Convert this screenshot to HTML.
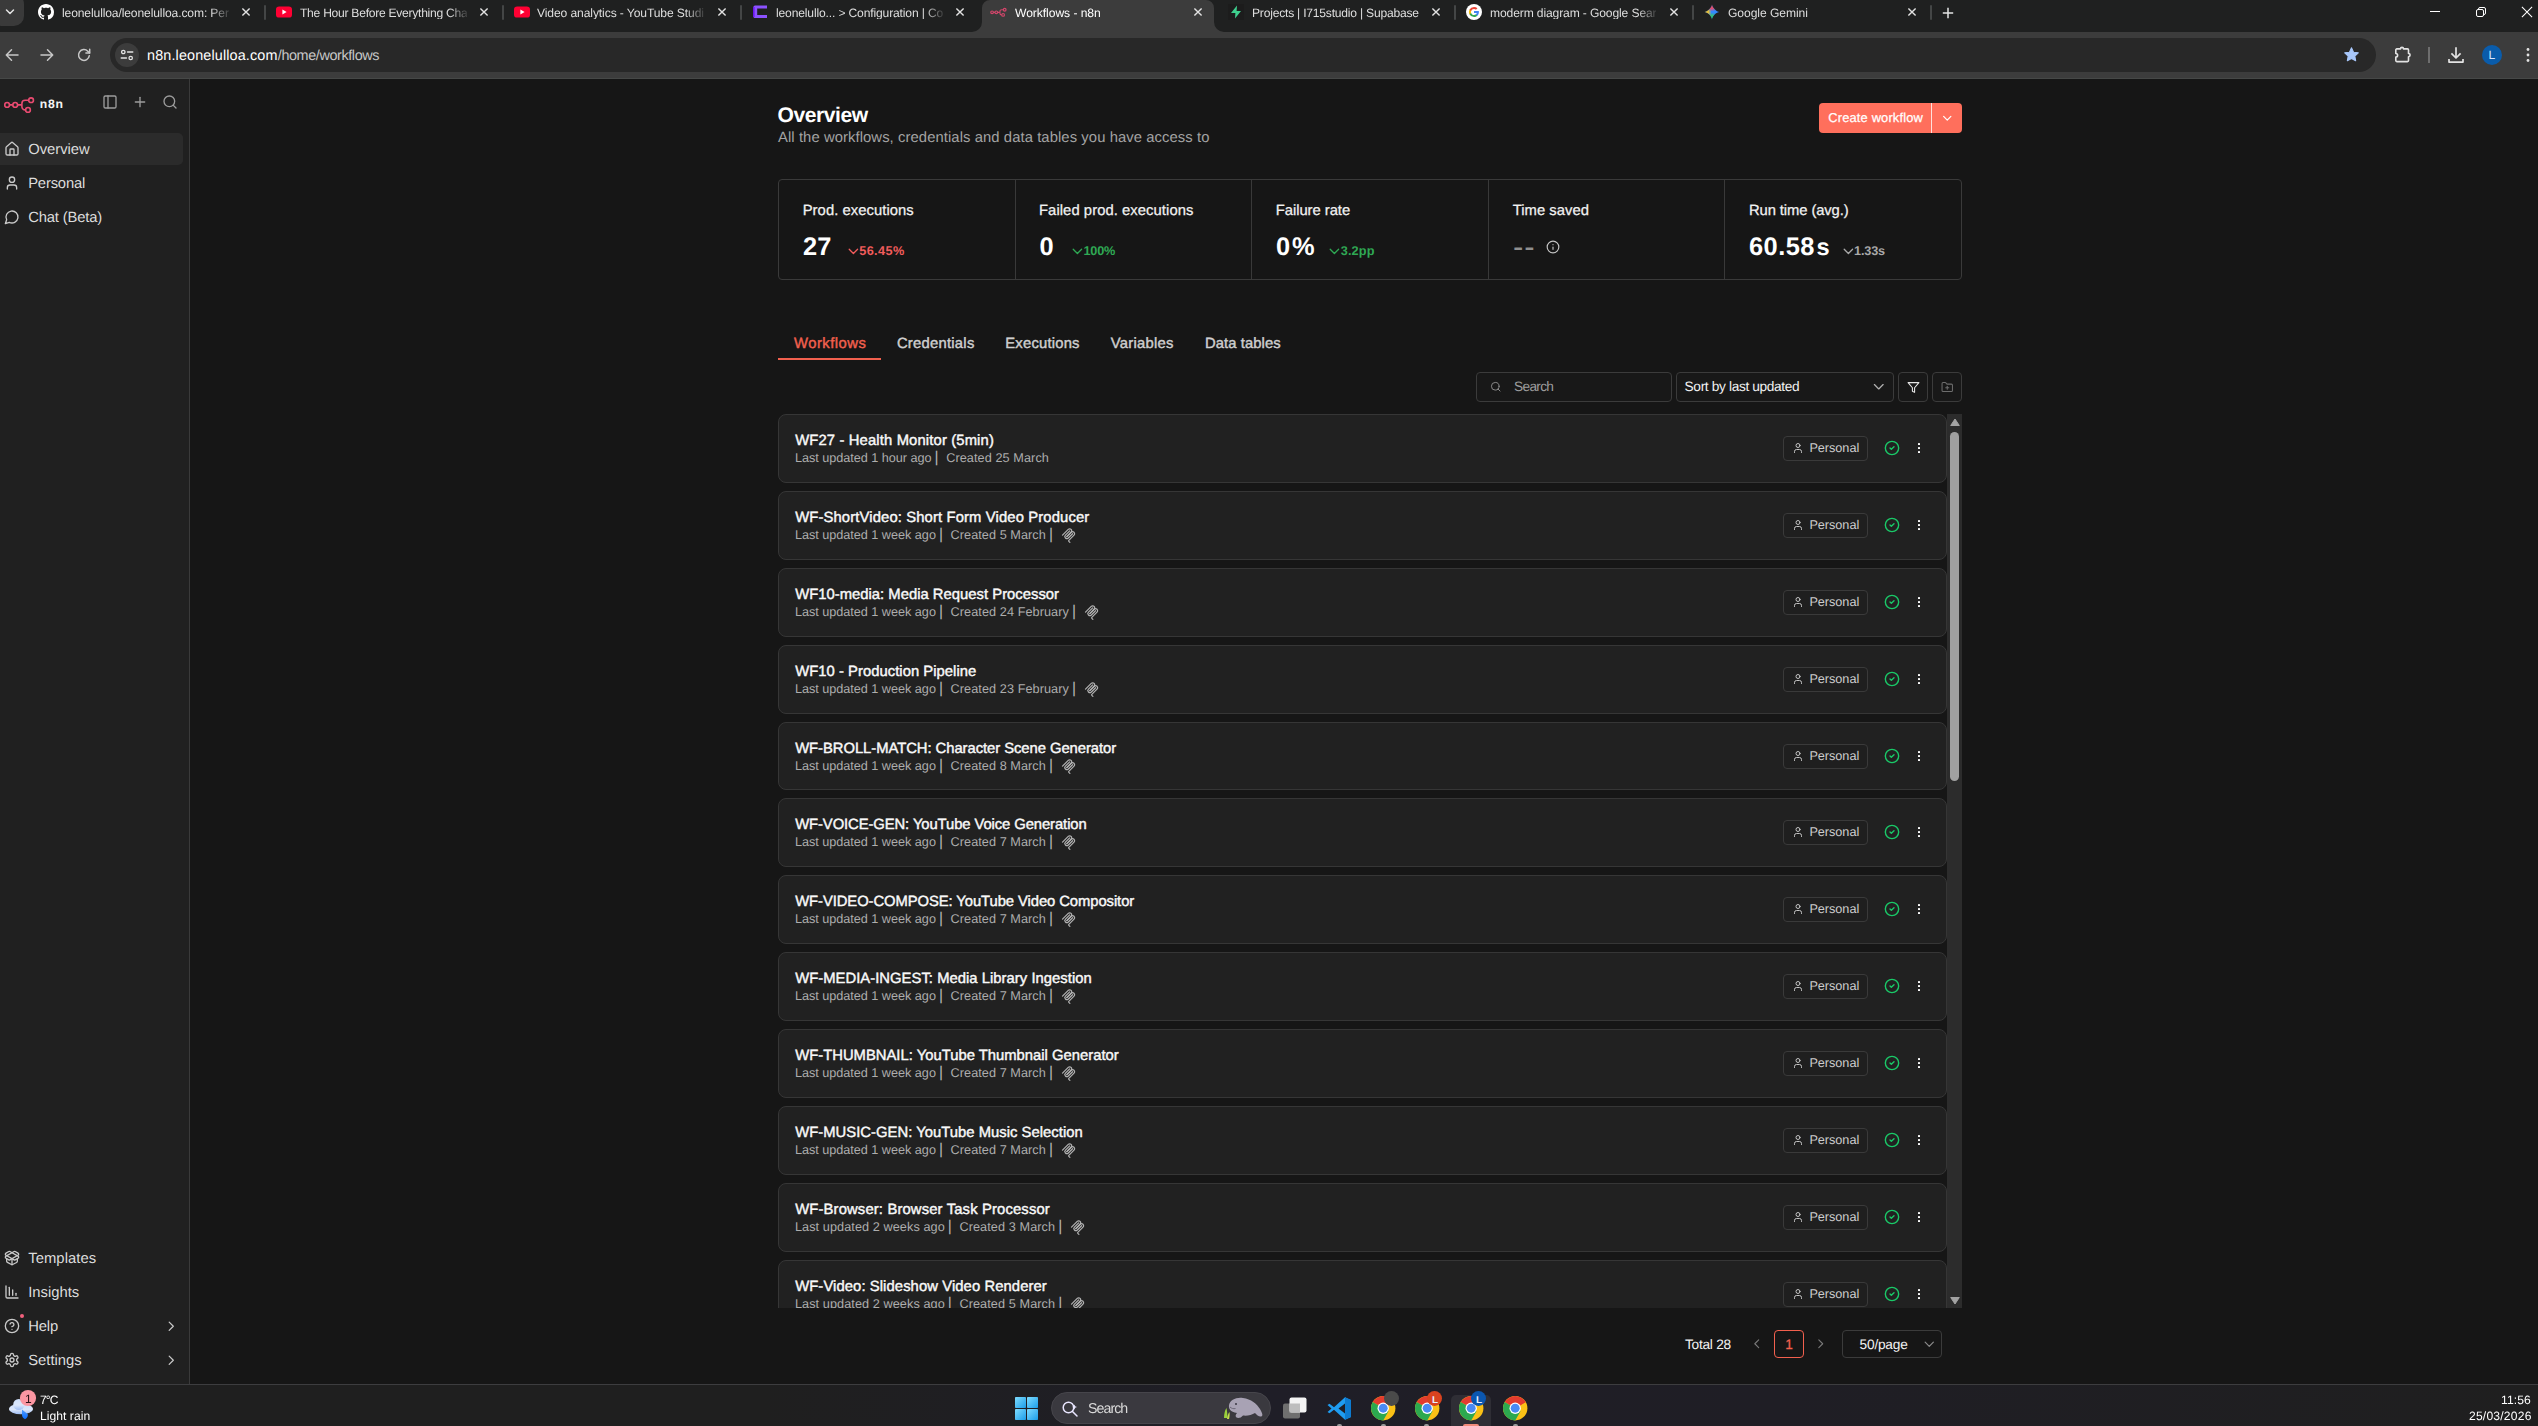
<!DOCTYPE html>
<html lang="en">
<head>
<meta charset="utf-8">
<title>Workflows - n8n</title>
<style>
*{box-sizing:border-box;margin:0;padding:0}
html,body{width:2538px;height:1426px;overflow:hidden;background:#161616}
body{position:relative;font-family:"Liberation Sans",sans-serif;text-rendering:geometricPrecision}
.t{position:absolute;white-space:nowrap;line-height:1;display:block}
.b{position:absolute}
.i{position:absolute;display:block;overflow:visible}
</style>
</head>
<body>
<div class="b" style="left:0.00px;top:79.00px;width:2538.00px;height:1305.00px;background:#161616;"></div>
<div class="b" style="left:0.00px;top:79.00px;width:189.00px;height:1305.00px;background:#202020;"></div>
<div class="b" style="left:189.00px;top:79.00px;width:1.00px;height:1305.00px;background:#3a3a3a;"></div>
<div class="b" style="left:0.00px;top:0.00px;width:2538.00px;height:32.00px;background:#1f2020;"></div>
<div class="b" style="left:-8.00px;top:-6.00px;width:32.00px;height:32.00px;background:#3a3a3a;border-radius:10px;"></div>
<svg class="i" style="left:5px;top:8px" width="10" height="8" viewBox="0 0 10 8" fill="none" stroke="#e3e3e3" stroke-width="1.5" stroke-linecap="round" stroke-linejoin="round"><path d="M1.5 2 5 5.5 8.5 2"/></svg>
<svg class="i" style="left:972px;top:0" width="252" height="32" viewBox="0 0 252 32"><path d="M0 32a10 10 0 0 0 10-10V8a8 8 0 0 1 8-8h216a8 8 0 0 1 8 8v14a10 10 0 0 0 10 10z" fill="#3c3c3c"/></svg>
<svg class="i" style="left:37.9px;top:4px" width="16" height="16" viewBox="0 0 16 16"><path fill="#ffffff" d="M8 0C3.58 0 0 3.58 0 8c0 3.54 2.29 6.53 5.47 7.59.4.07.55-.17.55-.38 0-.19-.01-.82-.01-1.49-2.01.37-2.53-.49-2.69-.94-.09-.23-.48-.94-.82-1.13-.28-.15-.68-.52-.01-.53.63-.01 1.08.58 1.23.82.72 1.21 1.87.87 2.33.66.07-.52.28-.87.51-1.07-1.78-.2-3.64-.89-3.64-3.95 0-.87.31-1.59.82-2.15-.08-.2-.36-1.02.08-2.12 0 0 .67-.21 2.2.82.64-.18 1.32-.27 2-.27.68 0 1.36.09 2 .27 1.53-1.04 2.2-.82 2.2-.82.44 1.1.16 1.92.08 2.12.51.56.82 1.27.82 2.15 0 3.07-1.87 3.75-3.65 3.950.29.25.54.73.54 1.48 0 1.07-.01 1.93-.01 2.2 0 .21.15.46.55.38A8.013 8.013 0 0 0 16 8c0-4.42-3.58-8-8-8z"/></svg>
<span class="t" style="top:7px;font-size:12.1px;color:#dedede;left:61.80px;letter-spacing:-0.124px;will-change:transform;-webkit-mask-image:linear-gradient(90deg,#000 0,#000 89%,transparent 102%);mask-image:linear-gradient(90deg,#000 0,#000 89%,transparent 102%);">leonelulloa/leonelulloa.com: Per</span>
<svg class="i" style="left:240.10px;top:6.30px" width="12" height="12" viewBox="-6 -6 12 12" fill="none" stroke="#e3e3e3" stroke-width="1.4" stroke-linecap="butt"><path d="M-3.6 -3.6L3.6 3.6M3.6 -3.6L-3.6 3.6"/></svg>
<div class="b" style="left:264.00px;top:5.00px;width:2.00px;height:15.00px;background:#444646;border-radius:1px;"></div>
<svg class="i" style="left:276px;top:4px" width="16" height="16" viewBox="0 0 16 16"><rect x="0" y="2.4" width="16" height="11.2" rx="3.2" fill="#ff0033"/><path d="M6.4 5.6 10.6 8 6.4 10.4z" fill="#fff"/></svg>
<span class="t" style="top:7px;font-size:12.1px;color:#dedede;left:299.50px;letter-spacing:-0.267px;will-change:transform;-webkit-mask-image:linear-gradient(90deg,#000 0,#000 89%,transparent 102%);mask-image:linear-gradient(90deg,#000 0,#000 89%,transparent 102%);">The Hour Before Everything Cha</span>
<svg class="i" style="left:477.60px;top:6.30px" width="12" height="12" viewBox="-6 -6 12 12" fill="none" stroke="#e3e3e3" stroke-width="1.4" stroke-linecap="butt"><path d="M-3.6 -3.6L3.6 3.6M3.6 -3.6L-3.6 3.6"/></svg>
<div class="b" style="left:502.00px;top:5.00px;width:2.00px;height:15.00px;background:#444646;border-radius:1px;"></div>
<svg class="i" style="left:513.8px;top:4px" width="16" height="16" viewBox="0 0 16 16"><rect x="0" y="2.4" width="16" height="11.2" rx="3.2" fill="#ff0033"/><path d="M6.4 5.6 10.6 8 6.4 10.4z" fill="#fff"/></svg>
<span class="t" style="top:7px;font-size:12.1px;color:#dedede;left:537.30px;letter-spacing:-0.103px;will-change:transform;-webkit-mask-image:linear-gradient(90deg,#000 0,#000 89%,transparent 102%);mask-image:linear-gradient(90deg,#000 0,#000 89%,transparent 102%);">Video analytics - YouTube Studi</span>
<svg class="i" style="left:716.00px;top:6.30px" width="12" height="12" viewBox="-6 -6 12 12" fill="none" stroke="#e3e3e3" stroke-width="1.4" stroke-linecap="butt"><path d="M-3.6 -3.6L3.6 3.6M3.6 -3.6L-3.6 3.6"/></svg>
<div class="b" style="left:740.00px;top:5.00px;width:2.00px;height:15.00px;background:#444646;border-radius:1px;"></div>
<svg class="i" style="left:751.5px;top:4px" width="16" height="16" viewBox="0 0 16 16"><path d="M3 1.5h12v3H5.2v6.6H15v3H3a1.6 1.6 0 0 1-1.6-1.6V3.1A1.6 1.6 0 0 1 3 1.5z" fill="#8c52ff"/><path d="M1 3.1h1.6v9.8H1z" fill="#6b16ed"/></svg>
<span class="t" style="top:7px;font-size:12.1px;color:#dedede;left:775.80px;letter-spacing:-0.152px;will-change:transform;-webkit-mask-image:linear-gradient(90deg,#000 0,#000 89%,transparent 102%);mask-image:linear-gradient(90deg,#000 0,#000 89%,transparent 102%);">leonelullo... &gt; Configuration | Co</span>
<svg class="i" style="left:953.80px;top:6.30px" width="12" height="12" viewBox="-6 -6 12 12" fill="none" stroke="#e3e3e3" stroke-width="1.4" stroke-linecap="butt"><path d="M-3.6 -3.6L3.6 3.6M3.6 -3.6L-3.6 3.6"/></svg>
<svg class="i" style="left:989.7px;top:4px" width="17" height="16" viewBox="0 0 17 16" fill="none" stroke="#d4466b" stroke-width="1.150"><circle cx="2.100" cy="8.300" r="1.350"/><circle cx="6.300" cy="8.300" r="1.350"/><circle cx="14.700" cy="5.700" r="1.350"/><circle cx="13.100" cy="10.900" r="1.350"/><path d="M3.450 8.300h1.500M7.650 8.300h2.100"/><path d="M13.350 5.700h-1.700a1.700 1.700 0 0 0-1.700 1.700v1.800a1.700 1.700 0 0 0 1.700 1.700h.1"/></svg>
<span class="t" style="top:7px;font-size:12.1px;color:#ffffff;left:1014.50px;letter-spacing:-0.051px;will-change:transform;">Workflows - n8n</span>
<svg class="i" style="left:1192.00px;top:6.30px" width="12" height="12" viewBox="-6 -6 12 12" fill="none" stroke="#e3e3e3" stroke-width="1.4" stroke-linecap="butt"><path d="M-3.6 -3.6L3.6 3.6M3.6 -3.6L-3.6 3.6"/></svg>
<svg class="i" style="left:1228.1px;top:4px" width="16" height="16" viewBox="0 0 16 16"><rect width="16" height="16" fill="#1c1c1c"/><path d="M9 1.5 3 9h4.4L7 14.5 13 7H8.6z" fill="#3ecf8e"/></svg>
<span class="t" style="top:7px;font-size:12.1px;color:#dedede;left:1251.70px;letter-spacing:-0.215px;will-change:transform;">Projects | I715studio | Supabase</span>
<svg class="i" style="left:1429.70px;top:6.30px" width="12" height="12" viewBox="-6 -6 12 12" fill="none" stroke="#e3e3e3" stroke-width="1.4" stroke-linecap="butt"><path d="M-3.6 -3.6L3.6 3.6M3.6 -3.6L-3.6 3.6"/></svg>
<div class="b" style="left:1454.00px;top:5.00px;width:2.00px;height:15.00px;background:#444646;border-radius:1px;"></div>
<svg class="i" style="left:1465.6px;top:4px" width="16" height="16" viewBox="0 0 16 16"><circle cx="8" cy="8" r="8" fill="#fff"/><path d="M12.9 8.12c0-.36-.03-.7-.09-1.03H8v1.95h2.75a2.35 2.35 0 0 1-1.02 1.54v1.28h1.65c.97-.89 1.52-2.2 1.52-3.74z" fill="#4285f4"/><path d="M8 13.1c1.38 0 2.53-.46 3.38-1.24l-1.65-1.28c-.46.3-1.04.49-1.73.49-1.33 0-2.46-.9-2.86-2.1h-1.7v1.32A5.1 5.1 0 0 0 8 13.1z" fill="#34a853"/><path d="M5.14 8.97a3.06 3.06 0 0 1 0-1.94V5.71h-1.7a5.1 5.1 0 0 0 0 4.58z" fill="#fbbc05"/><path d="M8 4.93c.75 0 1.42.26 1.95.76l1.46-1.46A4.9 4.9 0 0 0 8 2.9a5.1 5.1 0 0 0-4.56 2.81l1.7 1.32c.4-1.2 1.53-2.1 2.86-2.1z" fill="#ea4335"/></svg>
<span class="t" style="top:7px;font-size:12.1px;color:#dedede;left:1489.80px;letter-spacing:-0.128px;will-change:transform;-webkit-mask-image:linear-gradient(90deg,#000 0,#000 89%,transparent 102%);mask-image:linear-gradient(90deg,#000 0,#000 89%,transparent 102%);">moderm diagram - Google Sear</span>
<svg class="i" style="left:1667.80px;top:6.30px" width="12" height="12" viewBox="-6 -6 12 12" fill="none" stroke="#e3e3e3" stroke-width="1.4" stroke-linecap="butt"><path d="M-3.6 -3.6L3.6 3.6M3.6 -3.6L-3.6 3.6"/></svg>
<div class="b" style="left:1692.00px;top:5.00px;width:2.00px;height:15.00px;background:#444646;border-radius:1px;"></div>
<svg class="i" style="left:1703.9px;top:4px" width="16" height="16" viewBox="0 0 16 16"><defs><radialGradient id="gr" cx="8" cy="1" r="6.5" gradientUnits="userSpaceOnUse"><stop offset="0" stop-color="#ff4556"/><stop offset=".55" stop-color="#ff4556" stop-opacity=".85"/><stop offset="1" stop-color="#ff4556" stop-opacity="0"/></radialGradient><radialGradient id="gy" cx="1" cy="8" r="6.5" gradientUnits="userSpaceOnUse"><stop offset="0" stop-color="#ffc61a"/><stop offset=".55" stop-color="#ffc61a" stop-opacity=".85"/><stop offset="1" stop-color="#ffc61a" stop-opacity="0"/></radialGradient><radialGradient id="gn" cx="8" cy="15" r="6.500" gradientUnits="userSpaceOnUse"><stop offset="0" stop-color="#1fc463"/><stop offset=".55" stop-color="#35c566" stop-opacity=".85"/><stop offset="1" stop-color="#35c566" stop-opacity="0"/></radialGradient></defs><path id="gs" d="M8 .6C8 3.500 12.500 8 15.400 8 12.500 8 8 12.500 8 15.400 8 12.500 3.500 8 .6 8 3.500 8 8 3.500 8 .6z" fill="#3388ff"/><path d="M8 .6C8 3.500 12.500 8 15.400 8 12.500 8 8 12.500 8 15.400 8 12.500 3.500 8 .6 8 3.500 8 8 3.500 8 .6z" fill="url(#gn)"/><path d="M8 .6C8 3.500 12.500 8 15.400 8 12.500 8 8 12.500 8 15.400 8 12.500 3.500 8 .6 8 3.500 8 8 3.500 8 .6z" fill="url(#gy)"/><path d="M8 .6C8 3.500 12.500 8 15.400 8 12.500 8 8 12.500 8 15.400 8 12.500 3.500 8 .6 8 3.500 8 8 3.500 8 .6z" fill="url(#gr)"/></svg>
<span class="t" style="top:7px;font-size:12.1px;color:#dedede;left:1727.50px;letter-spacing:-0.067px;will-change:transform;">Google Gemini</span>
<svg class="i" style="left:1906.00px;top:6.30px" width="12" height="12" viewBox="-6 -6 12 12" fill="none" stroke="#e3e3e3" stroke-width="1.4" stroke-linecap="butt"><path d="M-3.6 -3.6L3.6 3.6M3.6 -3.6L-3.6 3.6"/></svg>
<div class="b" style="left:1930.00px;top:5.00px;width:2.00px;height:15.00px;background:#444646;border-radius:1px;"></div>
<svg class="i" style="left:1941.6px;top:6.5px" width="12" height="12" viewBox="0 0 12 12" fill="none" stroke="#e3e3e3" stroke-width="1.5"><path d="M6 .8v10.4M.8 6h10.4"/></svg>
<div class="b" style="left:2430.00px;top:11.00px;width:10.00px;height:1.00px;background:#ffffff;"></div>
<svg class="i" style="left:2474px;top:5px" width="14" height="14" viewBox="0 0 14 14" fill="none" stroke="#ffffff" stroke-width="1"><rect x="2.5" y="4.5" width="7" height="7" rx="1.500"/><path d="M4.500 4.500V4a1.500 1.500 0 0 1 1.500-1.500h4A1.500 1.500 0 0 1 11.500 4v4a1.500 1.500 0 0 1-1.500 1.500h-.5"/></svg>
<svg class="i" style="left:2521px;top:6px" width="12" height="12" viewBox="0 0 12 12" fill="none" stroke="#ffffff" stroke-width="1.050"><path d="M.9.9l10.200 10.200M11.100.9.9 11.100"/></svg>
<div class="b" style="left:0.00px;top:32.00px;width:2538.00px;height:46.00px;background:#3c3c3c;"></div>
<div class="b" style="left:0.00px;top:78.00px;width:2538.00px;height:1.00px;background:#464847;"></div>
<div class="b" style="left:110.00px;top:38.00px;width:2265.60px;height:34.00px;background:#282828;border-radius:17px;"></div>
<div class="b" style="left:115.00px;top:43.00px;width:24.00px;height:24.00px;background:#3c3c3c;border-radius:12px;"></div>
<svg class="i" style="left:4px;top:47px" width="16" height="16" viewBox="0 0 16 16" fill="none" stroke="#c7c7c7" stroke-width="1.5" stroke-linecap="round" stroke-linejoin="round"><path d="M14 8H2.500M7.500 2.800 2.300 8l5.200 5.200"/></svg>
<svg class="i" style="left:39px;top:47px" width="16" height="16" viewBox="0 0 16 16" fill="none" stroke="#c7c7c7" stroke-width="1.5" stroke-linecap="round" stroke-linejoin="round"><path d="M2 8h11.500M8.500 2.800 13.700 8l-5.200 5.200"/></svg>
<svg class="i" style="left:76px;top:47px" width="16" height="16" viewBox="0 0 16 16" fill="none" stroke="#c7c7c7" stroke-width="1.5" stroke-linecap="round" stroke-linejoin="round"><path d="M13.300 8.700A5.400 5.400 0 1 1 11.800 4.200L13.600 6"/><path d="M13.700 2.300V6.100H9.900"/></svg>
<svg class="i" style="left:119px;top:47px" width="16" height="16" viewBox="0 0 16 16" fill="none" stroke="#e3e3e3" stroke-width="1.3" stroke-linecap="round"><circle cx="4.300" cy="5" r="1.700"/><path d="M8.500 5h5.300"/><circle cx="11.700" cy="11" r="1.700"/><path d="M2.200 11h5.300"/></svg>
<span class="t" style="top:49px;font-size:14.4px;color:#ffffff;left:147.00px;letter-spacing:0.134px;">n8n.leonelulloa.com</span>
<span class="t" style="top:49px;font-size:14.4px;color:#c7c7c7;left:277.80px;letter-spacing:-0.395px;">/home/workflows</span>
<svg class="i" style="left:2343.3px;top:46.3px" width="17" height="17" viewBox="0 0 24 24"><path d="M12 2.600l2.900 6.100 6.700.9-4.900 4.600 1.200 6.600-5.900-3.200-5.900 3.200 1.200-6.600-4.900-4.600 6.700-.9z" fill="#a8c7fa" stroke="#a8c7fa" stroke-width="1.500" stroke-linejoin="round"/></svg>
<svg class="i" style="left:2393px;top:45px" width="20" height="20" viewBox="0 0 20 20" fill="none" stroke="#e3e3e3" stroke-width="1.600" stroke-linejoin="round"><path d="M3.800 3.900h3.700a1.500 1.500 0 0 1 3 0h4a1 1 0 0 1 1 1v3.600a1.600 1.600 0 0 1 0 3.200v3.900a1 1 0 0 1-1 1H3.800a1 1 0 0 1-1-1v-3.500a1.800 1.800 0 0 0 0-3.600V4.900a1 1 0 0 1 1-1z"/></svg>
<div class="b" style="left:2428.00px;top:47.00px;width:2.00px;height:16.00px;background:#6e6e6e;"></div>
<svg class="i" style="left:2446px;top:45px" width="20" height="20" viewBox="0 0 20 20" fill="none" stroke="#e3e3e3" stroke-width="1.700" stroke-linecap="butt" stroke-linejoin="round"><path d="M10 2.200v10.600M5.400 8.400 10 13l4.600-4.600M3 14v3.100h14V14"/></svg>
<div class="b" style="left:2481.80px;top:45.00px;width:20.00px;height:20.00px;background:#0a5cab;border-radius:10px;"></div>
<span class="t" style="top:49px;font-size:12px;color:#d6e6ff;left:2488.50px;">L</span>
<svg class="i" style="left:2525px;top:47px" width="6" height="16" viewBox="0 0 6 16" fill="#e3e3e3"><circle cx="3" cy="2.500" r="1.400"/><circle cx="3" cy="8" r="1.400"/><circle cx="3" cy="13.500" r="1.400"/></svg>
<svg class="i" style="left:3px;top:95px" width="32" height="20" viewBox="0 0 32 20" fill="none" stroke="#ea4b71" stroke-width="1.600"><circle cx="4.100" cy="9.900" r="2.350"/><circle cx="12.200" cy="9.900" r="2.350"/><circle cx="28.100" cy="5.200" r="2.350"/><circle cx="25" cy="14.900" r="2.350"/><path d="M6.500 9.900h3.300M14.600 9.900h4.300"/><path d="M25.700 5.200h-3.600a3.200 3.200 0 0 0-3.200 3.200v3.300a3.200 3.200 0 0 0 3.200 3.200h.5"/></svg>
<span class="t" style="top:98px;font-size:12.2px;color:#f4f4f4;left:39.80px;font-weight:700;letter-spacing:0.755px;">n8n</span>
<svg class="i" style="left:102.00px;top:94.00px;" width="16" height="16" viewBox="0 0 24 24" fill="none" stroke="#9c9c9c" stroke-width="2" stroke-linecap="round" stroke-linejoin="round"><rect width="18" height="18" x="3" y="3" rx="2"/><path d="M9 3v18"/></svg>
<svg class="i" style="left:132.00px;top:94.00px;" width="16" height="16" viewBox="0 0 24 24" fill="none" stroke="#9c9c9c" stroke-width="2" stroke-linecap="round" stroke-linejoin="round"><path d="M5 12h14"/><path d="M12 5v14"/></svg>
<svg class="i" style="left:162.00px;top:94.00px;" width="16" height="16" viewBox="0 0 24 24" fill="none" stroke="#9c9c9c" stroke-width="2" stroke-linecap="round" stroke-linejoin="round"><circle cx="11" cy="11" r="8"/><path d="m21 21-4.3-4.3"/></svg>
<div class="b" style="left:0.00px;top:133.00px;width:183.00px;height:32.00px;background:#2b2b2b;border-radius:0 5px 5px 0;"></div>
<svg class="i" style="left:4.00px;top:141.00px;" width="16" height="16" viewBox="0 0 24 24" fill="none" stroke="#c9c9c9" stroke-width="2" stroke-linecap="round" stroke-linejoin="round"><path d="M15 21v-8a1 1 0 0 0-1-1h-4a1 1 0 0 0-1 1v8"/><path d="M3 10a2 2 0 0 1 .709-1.528l7-5.999a2 2 0 0 1 2.582 0l7 5.999A2 2 0 0 1 21 10v9a2 2 0 0 1-2 2H5a2 2 0 0 1-2-2z"/></svg>
<span class="t" style="top:143px;font-size:14.8px;color:#dcdcdc;left:28.20px;letter-spacing:-0.026px;">Overview</span>
<svg class="i" style="left:4.00px;top:175.00px;" width="16" height="16" viewBox="0 0 24 24" fill="none" stroke="#c9c9c9" stroke-width="2" stroke-linecap="round" stroke-linejoin="round"><path d="M19 21v-2a4 4 0 0 0-4-4H9a4 4 0 0 0-4 4v2"/><circle cx="12" cy="7" r="4"/></svg>
<span class="t" style="top:177px;font-size:14.8px;color:#dcdcdc;left:28.20px;letter-spacing:-0.188px;">Personal</span>
<svg class="i" style="left:4.00px;top:209.00px;" width="16" height="16" viewBox="0 0 24 24" fill="none" stroke="#c9c9c9" stroke-width="2" stroke-linecap="round" stroke-linejoin="round"><path d="M7.9 20A9 9 0 1 0 4 16.1L2 22Z"/></svg>
<span class="t" style="top:211px;font-size:14.8px;color:#dcdcdc;left:28.20px;letter-spacing:-0.158px;">Chat (Beta)</span>
<svg class="i" style="left:4.00px;top:1250.00px;" width="16" height="16" viewBox="0 0 24 24" fill="none" stroke="#c9c9c9" stroke-width="2" stroke-linecap="round" stroke-linejoin="round"><path d="M12 22v-9"/><path d="M15.17 2.21a1.67 1.67 0 0 1 1.63 0L21 4.57a1.93 1.93 0 0 1 0 3.36L8.82 14.79a1.655 1.655 0 0 1-1.64 0L3 12.43a1.93 1.93 0 0 1 0-3.36z"/><path d="M20 13v3.87a2.06 2.06 0 0 1-1.11 1.83l-6 3.08a1.93 1.93 0 0 1-1.78 0l-6-3.08A2.06 2.06 0 0 1 4 16.87V13"/><path d="M21 12.43a1.93 1.93 0 0 0 0-3.36L8.83 2.2a1.64 1.64 0 0 0-1.63 0L3 4.57a1.93 1.93 0 0 0 0 3.36l12.18 6.86a1.636 1.636 0 0 0 1.63 0z"/></svg>
<span class="t" style="top:1252px;font-size:14.8px;color:#dcdcdc;left:28.20px;letter-spacing:0.068px;">Templates</span>
<svg class="i" style="left:4.00px;top:1284.00px;" width="16" height="16" viewBox="0 0 24 24" fill="none" stroke="#c9c9c9" stroke-width="2" stroke-linecap="round" stroke-linejoin="round"><path d="M13 17V9"/><path d="M18 17v-3"/><path d="M3 3v16a2 2 0 0 0 2 2h16"/><path d="M8 17V5"/></svg>
<span class="t" style="top:1286px;font-size:14.8px;color:#dcdcdc;left:28.20px;">Insights</span>
<svg class="i" style="left:4.00px;top:1318.00px;" width="16" height="16" viewBox="0 0 24 24" fill="none" stroke="#c9c9c9" stroke-width="2" stroke-linecap="round" stroke-linejoin="round"><circle cx="12" cy="12" r="10"/><path d="M9.09 9a3 3 0 0 1 5.83 1c0 2-3 3-3 3"/><path d="M12 17h.01"/></svg>
<span class="t" style="top:1320px;font-size:14.8px;color:#dcdcdc;left:28.20px;letter-spacing:-0.146px;">Help</span>
<svg class="i" style="left:4.00px;top:1352.00px;" width="16" height="16" viewBox="0 0 24 24" fill="none" stroke="#c9c9c9" stroke-width="2" stroke-linecap="round" stroke-linejoin="round"><path d="M12.22 2h-.44a2 2 0 0 0-2 2v.18a2 2 0 0 1-1 1.73l-.43.25a2 2 0 0 1-2 0l-.15-.08a2 2 0 0 0-2.73.73l-.22.38a2 2 0 0 0 .73 2.73l.15.1a2 2 0 0 1 1 1.72v.51a2 2 0 0 1-1 1.74l-.15.09a2 2 0 0 0-.73 2.73l.22.38a2 2 0 0 0 2.73.73l.15-.08a2 2 0 0 1 2 0l.43.25a2 2 0 0 1 1 1.73V20a2 2 0 0 0 2 2h.44a2 2 0 0 0 2-2v-.18a2 2 0 0 1 1-1.73l.43-.25a2 2 0 0 1 2 0l.15.08a2 2 0 0 0 2.73-.73l.22-.39a2 2 0 0 0-.73-2.73l-.15-.08a2 2 0 0 1-1-1.74v-.5a2 2 0 0 1 1-1.74l.15-.09a2 2 0 0 0 .73-2.73l-.22-.38a2 2 0 0 0-2.73-.73l-.15.08a2 2 0 0 1-2 0l-.43-.25a2 2 0 0 1-1-1.73V4a2 2 0 0 0-2-2z"/><circle cx="12" cy="12" r="3"/></svg>
<span class="t" style="top:1354px;font-size:14.8px;color:#dcdcdc;left:28.20px;">Settings</span>
<svg class="i" style="left:162.55px;top:1317.75px;" width="16.5" height="16.5" viewBox="0 0 24 24" fill="none" stroke="#c9c9c9" stroke-width="1.8" stroke-linecap="round" stroke-linejoin="round"><path d="m9 18 6-6-6-6"/></svg>
<svg class="i" style="left:162.55px;top:1351.75px;" width="16.5" height="16.5" viewBox="0 0 24 24" fill="none" stroke="#c9c9c9" stroke-width="1.8" stroke-linecap="round" stroke-linejoin="round"><path d="m9 18 6-6-6-6"/></svg>
<div class="b" style="left:19.70px;top:1314.00px;width:4.30px;height:4.30px;background:#f2607c;border-radius:2.2px;"></div>
<span class="t" style="top:105px;font-size:21.1px;color:#ffffff;left:777.60px;font-weight:700;letter-spacing:-0.463px;">Overview</span>
<span class="t" style="top:131px;font-size:14.8px;color:#a3a3a3;left:778.00px;letter-spacing:0.084px;">All the workflows, credentials and data tables you have access to</span>
<div class="b" style="left:1818.90px;top:103.00px;width:143.30px;height:30.00px;background:#ff6f5c;border-radius:4px;"></div>
<div class="b" style="left:1931.00px;top:103.00px;width:1.00px;height:30.00px;background:#ffe1dc;"></div>
<span class="t" style="top:112px;font-size:12.9px;color:#ffffff;left:1828.30px;-webkit-text-stroke:0.25px currentColor;letter-spacing:0.151px;">Create workflow</span>
<svg class="i" style="left:1939.75px;top:110.75px;" width="14.5" height="14.5" viewBox="0 0 24 24" fill="none" stroke="#ffffff" stroke-width="2" stroke-linecap="round" stroke-linejoin="round"><path d="m6 9 6 6 6-6"/></svg>
<div class="b" style="left:778.00px;top:179.00px;width:1184.00px;height:101.00px;border:1px solid #3a3a3a;border-radius:4px;"></div>
<div class="b" style="left:1015.00px;top:180.00px;width:1.00px;height:98.50px;background:#393939;"></div>
<div class="b" style="left:1251.00px;top:180.00px;width:1.00px;height:98.50px;background:#393939;"></div>
<div class="b" style="left:1488.00px;top:180.00px;width:1.00px;height:98.50px;background:#393939;"></div>
<div class="b" style="left:1724.00px;top:180.00px;width:1.00px;height:98.50px;background:#393939;"></div>
<span class="t" style="top:204px;font-size:14.8px;color:#f2f2f2;left:802.70px;-webkit-text-stroke:0.25px currentColor;letter-spacing:0.057px;">Prod. executions</span>
<span class="t" style="top:204px;font-size:14.8px;color:#f2f2f2;left:1039.00px;-webkit-text-stroke:0.25px currentColor;letter-spacing:0.063px;">Failed prod. executions</span>
<span class="t" style="top:204px;font-size:14.8px;color:#f2f2f2;left:1275.70px;-webkit-text-stroke:0.25px currentColor;letter-spacing:-0.032px;">Failure rate</span>
<span class="t" style="top:204px;font-size:14.8px;color:#f2f2f2;left:1512.70px;-webkit-text-stroke:0.25px currentColor;letter-spacing:0.040px;">Time saved</span>
<span class="t" style="top:204px;font-size:14.8px;color:#f2f2f2;left:1749.00px;-webkit-text-stroke:0.25px currentColor;letter-spacing:-0.105px;">Run time (avg.)</span>
<span class="t" style="top:235px;font-size:25.4px;color:#ffffff;left:802.90px;font-weight:700;letter-spacing:0.347px;">27</span>
<span class="t" style="top:235px;font-size:25.4px;color:#ffffff;left:1039.40px;font-weight:700;">0</span>
<span class="t" style="top:235px;font-size:25.4px;color:#ffffff;left:1276.10px;font-weight:700;letter-spacing:1.889px;">0%</span>
<span class="t" style="top:235px;font-size:25.4px;color:#ffffff;left:1748.90px;font-weight:700;letter-spacing:0.509px;">60.58</span>
<span class="t" style="top:237px;font-size:23.6px;color:#ffffff;left:1816.60px;font-weight:700;">s</span>
<svg class="i" style="left:845.00px;top:242.50px;" width="16.8" height="16.8" viewBox="0 0 24 24" fill="none" stroke="#f25c5c" stroke-width="1.86" stroke-linecap="round" stroke-linejoin="round"><path d="m6 9 6 6 6-6"/></svg>
<span class="t" style="top:245px;font-size:12.7px;color:#f25c5c;left:859.20px;font-weight:700;letter-spacing:0.405px;">56.45%</span>
<svg class="i" style="left:1068.80px;top:242.50px;" width="16.8" height="16.8" viewBox="0 0 24 24" fill="none" stroke="#2fa954" stroke-width="1.86" stroke-linecap="round" stroke-linejoin="round"><path d="m6 9 6 6 6-6"/></svg>
<span class="t" style="top:245px;font-size:12.7px;color:#2fa954;left:1083.50px;font-weight:700;letter-spacing:-0.227px;">100%</span>
<svg class="i" style="left:1326.40px;top:242.50px;" width="16.8" height="16.8" viewBox="0 0 24 24" fill="none" stroke="#2fa954" stroke-width="1.86" stroke-linecap="round" stroke-linejoin="round"><path d="m6 9 6 6 6-6"/></svg>
<span class="t" style="top:245px;font-size:12.7px;color:#2fa954;left:1340.70px;font-weight:700;letter-spacing:0.157px;">3.2pp</span>
<svg class="i" style="left:1839.60px;top:242.50px;" width="16.8" height="16.8" viewBox="0 0 24 24" fill="none" stroke="#a9a9a9" stroke-width="1.86" stroke-linecap="round" stroke-linejoin="round"><path d="m6 9 6 6 6-6"/></svg>
<span class="t" style="top:245px;font-size:12.7px;color:#a9a9a9;left:1854.00px;font-weight:700;letter-spacing:-0.170px;">1.33s</span>
<span class="t" style="top:231px;font-size:31px;color:#8f8f8f;left:1513.00px;letter-spacing:0.9px;">--</span>
<svg class="i" style="left:1546.00px;top:240.30px;" width="14" height="14" viewBox="0 0 24 24" fill="none" stroke="#c4c4c4" stroke-width="2" stroke-linecap="round" stroke-linejoin="round"><circle cx="12" cy="12" r="10"/><path d="M12 16v-4"/><path d="M12 8h.01"/></svg>
<span class="t" style="top:337px;font-size:14.8px;color:#f2604e;left:794.00px;-webkit-text-stroke:0.42px currentColor;letter-spacing:0.490px;">Workflows</span>
<span class="t" style="top:337px;font-size:14.8px;color:#cfcfcf;left:896.90px;-webkit-text-stroke:0.42px currentColor;letter-spacing:0.254px;">Credentials</span>
<span class="t" style="top:337px;font-size:14.8px;color:#cfcfcf;left:1005.30px;-webkit-text-stroke:0.42px currentColor;letter-spacing:0.200px;">Executions</span>
<span class="t" style="top:337px;font-size:14.8px;color:#cfcfcf;left:1110.70px;-webkit-text-stroke:0.42px currentColor;letter-spacing:0.275px;">Variables</span>
<span class="t" style="top:337px;font-size:14.8px;color:#cfcfcf;left:1205.00px;-webkit-text-stroke:0.42px currentColor;letter-spacing:0.083px;">Data tables</span>
<div class="b" style="left:778.20px;top:358.00px;width:102.80px;height:2.30px;background:#f2604e;"></div>
<div class="b" style="left:1476.00px;top:372.00px;width:196.00px;height:30.00px;background:#181818;border:1px solid #3b3b3b;border-radius:4px;"></div>
<svg class="i" style="left:1490.45px;top:380.95px;" width="11.5" height="11.5" viewBox="0 0 24 24" fill="none" stroke="#8c8c8c" stroke-width="2" stroke-linecap="round" stroke-linejoin="round"><circle cx="11" cy="11" r="8"/><path d="m21 21-4.3-4.3"/></svg>
<span class="t" style="top:380px;font-size:13.7px;color:#9d9d9d;left:1514.00px;letter-spacing:-0.682px;">Search</span>
<div class="b" style="left:1676.00px;top:372.00px;width:218.00px;height:30.00px;background:#181818;border:1px solid #3b3b3b;border-radius:4px;"></div>
<span class="t" style="top:380px;font-size:13.7px;color:#f2f2f2;left:1684.60px;letter-spacing:-0.350px;">Sort by last updated</span>
<svg class="i" style="left:1870.25px;top:378.25px;" width="17.5" height="17.5" viewBox="0 0 24 24" fill="none" stroke="#b0b0b0" stroke-width="1.7" stroke-linecap="round" stroke-linejoin="round"><path d="m6 9 6 6 6-6"/></svg>
<div class="b" style="left:1898.00px;top:372.00px;width:30.00px;height:30.00px;background:#181818;border:1px solid #3b3b3b;border-radius:4px;"></div>
<svg class="i" style="left:1906.50px;top:380.50px;" width="13" height="13" viewBox="0 0 24 24" fill="none" stroke="#e6e6e6" stroke-width="2" stroke-linecap="round" stroke-linejoin="round"><polygon points="22 3 2 3 10 12.46 10 19 14 21 14 12.46 22 3"/></svg>
<div class="b" style="left:1932.00px;top:372.00px;width:30.00px;height:30.00px;background:#181818;border:1px solid #3b3b3b;border-radius:4px;"></div>
<svg class="i" style="left:1940.75px;top:380.75px;" width="12.5" height="12.5" viewBox="0 0 24 24" fill="none" stroke="#6d6d6d" stroke-width="2" stroke-linecap="round" stroke-linejoin="round"><path d="M12 10v6"/><path d="M9 13h6"/><path d="M20 20a2 2 0 0 0 2-2V8a2 2 0 0 0-2-2h-7.9a2 2 0 0 1-1.69-.9L9.6 3.9A2 2 0 0 0 7.93 3H4a2 2 0 0 0-2 2v13a2 2 0 0 0 2 2Z"/></svg>
<div class="b" style="left:778px;top:414px;width:1184px;height:894px;overflow:hidden">
<div class="b" style="left:0.00px;top:0.00px;width:1169.00px;height:69.00px;background:#212121;border:1px solid #363636;border-radius:8px;"></div>
<span class="t" style="top:20px;font-size:14.8px;color:#f9f9f9;left:17.20px;-webkit-text-stroke:0.42px currentColor;letter-spacing:0.140px;">WF27 - Health Monitor (5min)</span>
<span class="t" style="top:38px;font-size:12.7px;color:#adadad;left:16.90px;letter-spacing:-0.041px;">Last updated 1 hour ago</span>
<span class="t" style="top:36px;font-size:15.6px;color:#b4b4b4;left:156.50px;">|</span>
<span class="t" style="top:38px;font-size:12.7px;color:#adadad;left:168.20px;letter-spacing:0.077px;">Created 25 March</span>
<div class="b" style="left:1005.00px;top:22.00px;width:85.00px;height:25.00px;background:#1f1f1f;border:1px solid #3a3a3a;border-radius:4px;"></div>
<svg class="i" style="left:1014.20px;top:27.80px;" width="12" height="12" viewBox="0 0 24 24" fill="none" stroke="#c4c4c4" stroke-width="2" stroke-linecap="round" stroke-linejoin="round"><path d="M19 21v-2a4 4 0 0 0-4-4H9a4 4 0 0 0-4 4v2"/><circle cx="12" cy="7" r="4"/></svg>
<span class="t" style="top:28px;font-size:12.7px;color:#cdcdcd;left:1031.40px;letter-spacing:-0.032px;">Personal</span>
<svg class="i" style="left:1106.00px;top:26.00px;" width="16" height="16" viewBox="0 0 24 24" fill="none" stroke="#1ac968" stroke-width="2.1" stroke-linecap="round" stroke-linejoin="round"><circle cx="12" cy="12" r="10"/><path d="m9 12 2 2 4-4"/></svg>
<div class="b" style="left:1139.80px;top:28.70px;width:2.40px;height:2.40px;background:#ffffff;border-radius:0.6px;"></div>
<div class="b" style="left:1139.80px;top:32.80px;width:2.40px;height:2.40px;background:#ffffff;border-radius:0.6px;"></div>
<div class="b" style="left:1139.80px;top:36.90px;width:2.40px;height:2.40px;background:#ffffff;border-radius:0.6px;"></div>
<div class="b" style="left:0.00px;top:77.00px;width:1169.00px;height:69.00px;background:#212121;border:1px solid #363636;border-radius:8px;"></div>
<span class="t" style="top:97px;font-size:14.8px;color:#f9f9f9;left:17.20px;-webkit-text-stroke:0.42px currentColor;letter-spacing:0.131px;">WF-ShortVideo: Short Form Video Producer</span>
<span class="t" style="top:115px;font-size:12.7px;color:#adadad;left:16.90px;letter-spacing:-0.033px;">Last updated 1 week ago</span>
<span class="t" style="top:113px;font-size:15.6px;color:#b4b4b4;left:160.90px;">|</span>
<span class="t" style="top:115px;font-size:12.7px;color:#adadad;left:172.60px;letter-spacing:0.051px;">Created 5 March</span>
<span class="t" style="top:113px;font-size:15.6px;color:#b4b4b4;left:270.90px;">|</span>
<svg class="i" style="left:282.80px;top:113.90px;" width="15.2" height="15.2" viewBox="0 0 180 180" fill="none" stroke="#b2b2b2" stroke-width="14.5" stroke-linecap="round" stroke-linejoin="round"><path d="M18 84.8528L85.8822 16.9706C95.2548 7.59798 110.451 7.59798 119.823 16.9706C129.196 26.3431 129.196 41.5391 119.823 50.9117L68.5581 102.177"/><path d="M69.2652 101.47L119.823 50.9117C129.196 41.5391 144.392 41.5391 153.765 50.9117L154.118 51.2652C163.491 60.6378 163.491 75.8338 154.118 85.2063L92.7248 146.6C89.6006 149.724 89.6006 154.789 92.7248 157.913L105.331 170.52"/><path d="M102.853 33.9411L52.6482 84.1457C43.2756 93.5183 43.2756 108.714 52.6482 118.087C62.0208 127.459 77.2167 127.459 86.5893 118.087L136.794 67.8822"/></svg>
<div class="b" style="left:1005.00px;top:99.00px;width:85.00px;height:25.00px;background:#1f1f1f;border:1px solid #3a3a3a;border-radius:4px;"></div>
<svg class="i" style="left:1014.20px;top:104.80px;" width="12" height="12" viewBox="0 0 24 24" fill="none" stroke="#c4c4c4" stroke-width="2" stroke-linecap="round" stroke-linejoin="round"><path d="M19 21v-2a4 4 0 0 0-4-4H9a4 4 0 0 0-4 4v2"/><circle cx="12" cy="7" r="4"/></svg>
<span class="t" style="top:105px;font-size:12.7px;color:#cdcdcd;left:1031.40px;letter-spacing:-0.032px;">Personal</span>
<svg class="i" style="left:1106.00px;top:103.00px;" width="16" height="16" viewBox="0 0 24 24" fill="none" stroke="#1ac968" stroke-width="2.1" stroke-linecap="round" stroke-linejoin="round"><circle cx="12" cy="12" r="10"/><path d="m9 12 2 2 4-4"/></svg>
<div class="b" style="left:1139.80px;top:105.70px;width:2.40px;height:2.40px;background:#ffffff;border-radius:0.6px;"></div>
<div class="b" style="left:1139.80px;top:109.80px;width:2.40px;height:2.40px;background:#ffffff;border-radius:0.6px;"></div>
<div class="b" style="left:1139.80px;top:113.90px;width:2.40px;height:2.40px;background:#ffffff;border-radius:0.6px;"></div>
<div class="b" style="left:0.00px;top:154.00px;width:1169.00px;height:69.00px;background:#212121;border:1px solid #363636;border-radius:8px;"></div>
<span class="t" style="top:174px;font-size:14.8px;color:#f9f9f9;left:17.20px;-webkit-text-stroke:0.42px currentColor;letter-spacing:0.020px;">WF10-media: Media Request Processor</span>
<span class="t" style="top:192px;font-size:12.7px;color:#adadad;left:16.90px;letter-spacing:-0.033px;">Last updated 1 week ago</span>
<span class="t" style="top:190px;font-size:15.6px;color:#b4b4b4;left:160.90px;">|</span>
<span class="t" style="top:192px;font-size:12.7px;color:#adadad;left:172.60px;letter-spacing:0.068px;">Created 24 February</span>
<span class="t" style="top:190px;font-size:15.6px;color:#b4b4b4;left:294.00px;">|</span>
<svg class="i" style="left:305.90px;top:190.90px;" width="15.2" height="15.2" viewBox="0 0 180 180" fill="none" stroke="#b2b2b2" stroke-width="14.5" stroke-linecap="round" stroke-linejoin="round"><path d="M18 84.8528L85.8822 16.9706C95.2548 7.59798 110.451 7.59798 119.823 16.9706C129.196 26.3431 129.196 41.5391 119.823 50.9117L68.5581 102.177"/><path d="M69.2652 101.47L119.823 50.9117C129.196 41.5391 144.392 41.5391 153.765 50.9117L154.118 51.2652C163.491 60.6378 163.491 75.8338 154.118 85.2063L92.7248 146.6C89.6006 149.724 89.6006 154.789 92.7248 157.913L105.331 170.52"/><path d="M102.853 33.9411L52.6482 84.1457C43.2756 93.5183 43.2756 108.714 52.6482 118.087C62.0208 127.459 77.2167 127.459 86.5893 118.087L136.794 67.8822"/></svg>
<div class="b" style="left:1005.00px;top:176.00px;width:85.00px;height:25.00px;background:#1f1f1f;border:1px solid #3a3a3a;border-radius:4px;"></div>
<svg class="i" style="left:1014.20px;top:181.80px;" width="12" height="12" viewBox="0 0 24 24" fill="none" stroke="#c4c4c4" stroke-width="2" stroke-linecap="round" stroke-linejoin="round"><path d="M19 21v-2a4 4 0 0 0-4-4H9a4 4 0 0 0-4 4v2"/><circle cx="12" cy="7" r="4"/></svg>
<span class="t" style="top:182px;font-size:12.7px;color:#cdcdcd;left:1031.40px;letter-spacing:-0.032px;">Personal</span>
<svg class="i" style="left:1106.00px;top:180.00px;" width="16" height="16" viewBox="0 0 24 24" fill="none" stroke="#1ac968" stroke-width="2.1" stroke-linecap="round" stroke-linejoin="round"><circle cx="12" cy="12" r="10"/><path d="m9 12 2 2 4-4"/></svg>
<div class="b" style="left:1139.80px;top:182.70px;width:2.40px;height:2.40px;background:#ffffff;border-radius:0.6px;"></div>
<div class="b" style="left:1139.80px;top:186.80px;width:2.40px;height:2.40px;background:#ffffff;border-radius:0.6px;"></div>
<div class="b" style="left:1139.80px;top:190.90px;width:2.40px;height:2.40px;background:#ffffff;border-radius:0.6px;"></div>
<div class="b" style="left:0.00px;top:231.00px;width:1169.00px;height:69.00px;background:#212121;border:1px solid #363636;border-radius:8px;"></div>
<span class="t" style="top:251px;font-size:14.8px;color:#f9f9f9;left:17.20px;-webkit-text-stroke:0.42px currentColor;letter-spacing:0.038px;">WF10 - Production Pipeline</span>
<span class="t" style="top:269px;font-size:12.7px;color:#adadad;left:16.90px;letter-spacing:-0.033px;">Last updated 1 week ago</span>
<span class="t" style="top:267px;font-size:15.6px;color:#b4b4b4;left:160.90px;">|</span>
<span class="t" style="top:269px;font-size:12.7px;color:#adadad;left:172.60px;letter-spacing:0.068px;">Created 23 February</span>
<span class="t" style="top:267px;font-size:15.6px;color:#b4b4b4;left:294.00px;">|</span>
<svg class="i" style="left:305.90px;top:267.90px;" width="15.2" height="15.2" viewBox="0 0 180 180" fill="none" stroke="#b2b2b2" stroke-width="14.5" stroke-linecap="round" stroke-linejoin="round"><path d="M18 84.8528L85.8822 16.9706C95.2548 7.59798 110.451 7.59798 119.823 16.9706C129.196 26.3431 129.196 41.5391 119.823 50.9117L68.5581 102.177"/><path d="M69.2652 101.47L119.823 50.9117C129.196 41.5391 144.392 41.5391 153.765 50.9117L154.118 51.2652C163.491 60.6378 163.491 75.8338 154.118 85.2063L92.7248 146.6C89.6006 149.724 89.6006 154.789 92.7248 157.913L105.331 170.52"/><path d="M102.853 33.9411L52.6482 84.1457C43.2756 93.5183 43.2756 108.714 52.6482 118.087C62.0208 127.459 77.2167 127.459 86.5893 118.087L136.794 67.8822"/></svg>
<div class="b" style="left:1005.00px;top:253.00px;width:85.00px;height:25.00px;background:#1f1f1f;border:1px solid #3a3a3a;border-radius:4px;"></div>
<svg class="i" style="left:1014.20px;top:258.80px;" width="12" height="12" viewBox="0 0 24 24" fill="none" stroke="#c4c4c4" stroke-width="2" stroke-linecap="round" stroke-linejoin="round"><path d="M19 21v-2a4 4 0 0 0-4-4H9a4 4 0 0 0-4 4v2"/><circle cx="12" cy="7" r="4"/></svg>
<span class="t" style="top:259px;font-size:12.7px;color:#cdcdcd;left:1031.40px;letter-spacing:-0.032px;">Personal</span>
<svg class="i" style="left:1106.00px;top:257.00px;" width="16" height="16" viewBox="0 0 24 24" fill="none" stroke="#1ac968" stroke-width="2.1" stroke-linecap="round" stroke-linejoin="round"><circle cx="12" cy="12" r="10"/><path d="m9 12 2 2 4-4"/></svg>
<div class="b" style="left:1139.80px;top:259.70px;width:2.40px;height:2.40px;background:#ffffff;border-radius:0.6px;"></div>
<div class="b" style="left:1139.80px;top:263.80px;width:2.40px;height:2.40px;background:#ffffff;border-radius:0.6px;"></div>
<div class="b" style="left:1139.80px;top:267.90px;width:2.40px;height:2.40px;background:#ffffff;border-radius:0.6px;"></div>
<div class="b" style="left:0.00px;top:308.00px;width:1169.00px;height:68.00px;background:#212121;border:1px solid #363636;border-radius:8px;"></div>
<span class="t" style="top:328px;font-size:14.8px;color:#f9f9f9;left:17.20px;-webkit-text-stroke:0.42px currentColor;letter-spacing:-0.046px;">WF-BROLL-MATCH: Character Scene Generator</span>
<span class="t" style="top:346px;font-size:12.7px;color:#adadad;left:16.90px;letter-spacing:-0.033px;">Last updated 1 week ago</span>
<span class="t" style="top:344px;font-size:15.6px;color:#b4b4b4;left:160.90px;">|</span>
<span class="t" style="top:346px;font-size:12.7px;color:#adadad;left:172.60px;letter-spacing:0.051px;">Created 8 March</span>
<span class="t" style="top:344px;font-size:15.6px;color:#b4b4b4;left:270.90px;">|</span>
<svg class="i" style="left:282.80px;top:344.90px;" width="15.2" height="15.2" viewBox="0 0 180 180" fill="none" stroke="#b2b2b2" stroke-width="14.5" stroke-linecap="round" stroke-linejoin="round"><path d="M18 84.8528L85.8822 16.9706C95.2548 7.59798 110.451 7.59798 119.823 16.9706C129.196 26.3431 129.196 41.5391 119.823 50.9117L68.5581 102.177"/><path d="M69.2652 101.47L119.823 50.9117C129.196 41.5391 144.392 41.5391 153.765 50.9117L154.118 51.2652C163.491 60.6378 163.491 75.8338 154.118 85.2063L92.7248 146.6C89.6006 149.724 89.6006 154.789 92.7248 157.913L105.331 170.52"/><path d="M102.853 33.9411L52.6482 84.1457C43.2756 93.5183 43.2756 108.714 52.6482 118.087C62.0208 127.459 77.2167 127.459 86.5893 118.087L136.794 67.8822"/></svg>
<div class="b" style="left:1005.00px;top:330.00px;width:85.00px;height:25.00px;background:#1f1f1f;border:1px solid #3a3a3a;border-radius:4px;"></div>
<svg class="i" style="left:1014.20px;top:335.80px;" width="12" height="12" viewBox="0 0 24 24" fill="none" stroke="#c4c4c4" stroke-width="2" stroke-linecap="round" stroke-linejoin="round"><path d="M19 21v-2a4 4 0 0 0-4-4H9a4 4 0 0 0-4 4v2"/><circle cx="12" cy="7" r="4"/></svg>
<span class="t" style="top:336px;font-size:12.7px;color:#cdcdcd;left:1031.40px;letter-spacing:-0.032px;">Personal</span>
<svg class="i" style="left:1106.00px;top:334.00px;" width="16" height="16" viewBox="0 0 24 24" fill="none" stroke="#1ac968" stroke-width="2.1" stroke-linecap="round" stroke-linejoin="round"><circle cx="12" cy="12" r="10"/><path d="m9 12 2 2 4-4"/></svg>
<div class="b" style="left:1139.80px;top:336.70px;width:2.40px;height:2.40px;background:#ffffff;border-radius:0.6px;"></div>
<div class="b" style="left:1139.80px;top:340.80px;width:2.40px;height:2.40px;background:#ffffff;border-radius:0.6px;"></div>
<div class="b" style="left:1139.80px;top:344.90px;width:2.40px;height:2.40px;background:#ffffff;border-radius:0.6px;"></div>
<div class="b" style="left:0.00px;top:384.00px;width:1169.00px;height:69.00px;background:#212121;border:1px solid #363636;border-radius:8px;"></div>
<span class="t" style="top:404px;font-size:14.8px;color:#f9f9f9;left:17.20px;-webkit-text-stroke:0.42px currentColor;letter-spacing:-0.086px;">WF-VOICE-GEN: YouTube Voice Generation</span>
<span class="t" style="top:422px;font-size:12.7px;color:#adadad;left:16.90px;letter-spacing:-0.033px;">Last updated 1 week ago</span>
<span class="t" style="top:420px;font-size:15.6px;color:#b4b4b4;left:160.90px;">|</span>
<span class="t" style="top:422px;font-size:12.7px;color:#adadad;left:172.60px;letter-spacing:0.051px;">Created 7 March</span>
<span class="t" style="top:420px;font-size:15.6px;color:#b4b4b4;left:270.90px;">|</span>
<svg class="i" style="left:282.80px;top:420.90px;" width="15.2" height="15.2" viewBox="0 0 180 180" fill="none" stroke="#b2b2b2" stroke-width="14.5" stroke-linecap="round" stroke-linejoin="round"><path d="M18 84.8528L85.8822 16.9706C95.2548 7.59798 110.451 7.59798 119.823 16.9706C129.196 26.3431 129.196 41.5391 119.823 50.9117L68.5581 102.177"/><path d="M69.2652 101.47L119.823 50.9117C129.196 41.5391 144.392 41.5391 153.765 50.9117L154.118 51.2652C163.491 60.6378 163.491 75.8338 154.118 85.2063L92.7248 146.6C89.6006 149.724 89.6006 154.789 92.7248 157.913L105.331 170.52"/><path d="M102.853 33.9411L52.6482 84.1457C43.2756 93.5183 43.2756 108.714 52.6482 118.087C62.0208 127.459 77.2167 127.459 86.5893 118.087L136.794 67.8822"/></svg>
<div class="b" style="left:1005.00px;top:406.00px;width:85.00px;height:25.00px;background:#1f1f1f;border:1px solid #3a3a3a;border-radius:4px;"></div>
<svg class="i" style="left:1014.20px;top:411.80px;" width="12" height="12" viewBox="0 0 24 24" fill="none" stroke="#c4c4c4" stroke-width="2" stroke-linecap="round" stroke-linejoin="round"><path d="M19 21v-2a4 4 0 0 0-4-4H9a4 4 0 0 0-4 4v2"/><circle cx="12" cy="7" r="4"/></svg>
<span class="t" style="top:412px;font-size:12.7px;color:#cdcdcd;left:1031.40px;letter-spacing:-0.032px;">Personal</span>
<svg class="i" style="left:1106.00px;top:410.00px;" width="16" height="16" viewBox="0 0 24 24" fill="none" stroke="#1ac968" stroke-width="2.1" stroke-linecap="round" stroke-linejoin="round"><circle cx="12" cy="12" r="10"/><path d="m9 12 2 2 4-4"/></svg>
<div class="b" style="left:1139.80px;top:412.70px;width:2.40px;height:2.40px;background:#ffffff;border-radius:0.6px;"></div>
<div class="b" style="left:1139.80px;top:416.80px;width:2.40px;height:2.40px;background:#ffffff;border-radius:0.6px;"></div>
<div class="b" style="left:1139.80px;top:420.90px;width:2.40px;height:2.40px;background:#ffffff;border-radius:0.6px;"></div>
<div class="b" style="left:0.00px;top:461.00px;width:1169.00px;height:69.00px;background:#212121;border:1px solid #363636;border-radius:8px;"></div>
<span class="t" style="top:481px;font-size:14.8px;color:#f9f9f9;left:17.20px;-webkit-text-stroke:0.42px currentColor;letter-spacing:-0.075px;">WF-VIDEO-COMPOSE: YouTube Video Compositor</span>
<span class="t" style="top:499px;font-size:12.7px;color:#adadad;left:16.90px;letter-spacing:-0.033px;">Last updated 1 week ago</span>
<span class="t" style="top:497px;font-size:15.6px;color:#b4b4b4;left:160.90px;">|</span>
<span class="t" style="top:499px;font-size:12.7px;color:#adadad;left:172.60px;letter-spacing:0.051px;">Created 7 March</span>
<span class="t" style="top:497px;font-size:15.6px;color:#b4b4b4;left:270.90px;">|</span>
<svg class="i" style="left:282.80px;top:497.90px;" width="15.2" height="15.2" viewBox="0 0 180 180" fill="none" stroke="#b2b2b2" stroke-width="14.5" stroke-linecap="round" stroke-linejoin="round"><path d="M18 84.8528L85.8822 16.9706C95.2548 7.59798 110.451 7.59798 119.823 16.9706C129.196 26.3431 129.196 41.5391 119.823 50.9117L68.5581 102.177"/><path d="M69.2652 101.47L119.823 50.9117C129.196 41.5391 144.392 41.5391 153.765 50.9117L154.118 51.2652C163.491 60.6378 163.491 75.8338 154.118 85.2063L92.7248 146.6C89.6006 149.724 89.6006 154.789 92.7248 157.913L105.331 170.52"/><path d="M102.853 33.9411L52.6482 84.1457C43.2756 93.5183 43.2756 108.714 52.6482 118.087C62.0208 127.459 77.2167 127.459 86.5893 118.087L136.794 67.8822"/></svg>
<div class="b" style="left:1005.00px;top:483.00px;width:85.00px;height:25.00px;background:#1f1f1f;border:1px solid #3a3a3a;border-radius:4px;"></div>
<svg class="i" style="left:1014.20px;top:488.80px;" width="12" height="12" viewBox="0 0 24 24" fill="none" stroke="#c4c4c4" stroke-width="2" stroke-linecap="round" stroke-linejoin="round"><path d="M19 21v-2a4 4 0 0 0-4-4H9a4 4 0 0 0-4 4v2"/><circle cx="12" cy="7" r="4"/></svg>
<span class="t" style="top:489px;font-size:12.7px;color:#cdcdcd;left:1031.40px;letter-spacing:-0.032px;">Personal</span>
<svg class="i" style="left:1106.00px;top:487.00px;" width="16" height="16" viewBox="0 0 24 24" fill="none" stroke="#1ac968" stroke-width="2.1" stroke-linecap="round" stroke-linejoin="round"><circle cx="12" cy="12" r="10"/><path d="m9 12 2 2 4-4"/></svg>
<div class="b" style="left:1139.80px;top:489.70px;width:2.40px;height:2.40px;background:#ffffff;border-radius:0.6px;"></div>
<div class="b" style="left:1139.80px;top:493.80px;width:2.40px;height:2.40px;background:#ffffff;border-radius:0.6px;"></div>
<div class="b" style="left:1139.80px;top:497.90px;width:2.40px;height:2.40px;background:#ffffff;border-radius:0.6px;"></div>
<div class="b" style="left:0.00px;top:538.00px;width:1169.00px;height:69.00px;background:#212121;border:1px solid #363636;border-radius:8px;"></div>
<span class="t" style="top:558px;font-size:14.8px;color:#f9f9f9;left:17.20px;-webkit-text-stroke:0.42px currentColor;letter-spacing:0.034px;">WF-MEDIA-INGEST: Media Library Ingestion</span>
<span class="t" style="top:576px;font-size:12.7px;color:#adadad;left:16.90px;letter-spacing:-0.033px;">Last updated 1 week ago</span>
<span class="t" style="top:574px;font-size:15.6px;color:#b4b4b4;left:160.90px;">|</span>
<span class="t" style="top:576px;font-size:12.7px;color:#adadad;left:172.60px;letter-spacing:0.051px;">Created 7 March</span>
<span class="t" style="top:574px;font-size:15.6px;color:#b4b4b4;left:270.90px;">|</span>
<svg class="i" style="left:282.80px;top:574.90px;" width="15.2" height="15.2" viewBox="0 0 180 180" fill="none" stroke="#b2b2b2" stroke-width="14.5" stroke-linecap="round" stroke-linejoin="round"><path d="M18 84.8528L85.8822 16.9706C95.2548 7.59798 110.451 7.59798 119.823 16.9706C129.196 26.3431 129.196 41.5391 119.823 50.9117L68.5581 102.177"/><path d="M69.2652 101.47L119.823 50.9117C129.196 41.5391 144.392 41.5391 153.765 50.9117L154.118 51.2652C163.491 60.6378 163.491 75.8338 154.118 85.2063L92.7248 146.6C89.6006 149.724 89.6006 154.789 92.7248 157.913L105.331 170.52"/><path d="M102.853 33.9411L52.6482 84.1457C43.2756 93.5183 43.2756 108.714 52.6482 118.087C62.0208 127.459 77.2167 127.459 86.5893 118.087L136.794 67.8822"/></svg>
<div class="b" style="left:1005.00px;top:560.00px;width:85.00px;height:25.00px;background:#1f1f1f;border:1px solid #3a3a3a;border-radius:4px;"></div>
<svg class="i" style="left:1014.20px;top:565.80px;" width="12" height="12" viewBox="0 0 24 24" fill="none" stroke="#c4c4c4" stroke-width="2" stroke-linecap="round" stroke-linejoin="round"><path d="M19 21v-2a4 4 0 0 0-4-4H9a4 4 0 0 0-4 4v2"/><circle cx="12" cy="7" r="4"/></svg>
<span class="t" style="top:566px;font-size:12.7px;color:#cdcdcd;left:1031.40px;letter-spacing:-0.032px;">Personal</span>
<svg class="i" style="left:1106.00px;top:564.00px;" width="16" height="16" viewBox="0 0 24 24" fill="none" stroke="#1ac968" stroke-width="2.1" stroke-linecap="round" stroke-linejoin="round"><circle cx="12" cy="12" r="10"/><path d="m9 12 2 2 4-4"/></svg>
<div class="b" style="left:1139.80px;top:566.70px;width:2.40px;height:2.40px;background:#ffffff;border-radius:0.6px;"></div>
<div class="b" style="left:1139.80px;top:570.80px;width:2.40px;height:2.40px;background:#ffffff;border-radius:0.6px;"></div>
<div class="b" style="left:1139.80px;top:574.90px;width:2.40px;height:2.40px;background:#ffffff;border-radius:0.6px;"></div>
<div class="b" style="left:0.00px;top:615.00px;width:1169.00px;height:69.00px;background:#212121;border:1px solid #363636;border-radius:8px;"></div>
<span class="t" style="top:635px;font-size:14.8px;color:#f9f9f9;left:17.20px;-webkit-text-stroke:0.42px currentColor;letter-spacing:0.008px;">WF-THUMBNAIL: YouTube Thumbnail Generator</span>
<span class="t" style="top:653px;font-size:12.7px;color:#adadad;left:16.90px;letter-spacing:-0.033px;">Last updated 1 week ago</span>
<span class="t" style="top:651px;font-size:15.6px;color:#b4b4b4;left:160.90px;">|</span>
<span class="t" style="top:653px;font-size:12.7px;color:#adadad;left:172.60px;letter-spacing:0.051px;">Created 7 March</span>
<span class="t" style="top:651px;font-size:15.6px;color:#b4b4b4;left:270.90px;">|</span>
<svg class="i" style="left:282.80px;top:651.90px;" width="15.2" height="15.2" viewBox="0 0 180 180" fill="none" stroke="#b2b2b2" stroke-width="14.5" stroke-linecap="round" stroke-linejoin="round"><path d="M18 84.8528L85.8822 16.9706C95.2548 7.59798 110.451 7.59798 119.823 16.9706C129.196 26.3431 129.196 41.5391 119.823 50.9117L68.5581 102.177"/><path d="M69.2652 101.47L119.823 50.9117C129.196 41.5391 144.392 41.5391 153.765 50.9117L154.118 51.2652C163.491 60.6378 163.491 75.8338 154.118 85.2063L92.7248 146.6C89.6006 149.724 89.6006 154.789 92.7248 157.913L105.331 170.52"/><path d="M102.853 33.9411L52.6482 84.1457C43.2756 93.5183 43.2756 108.714 52.6482 118.087C62.0208 127.459 77.2167 127.459 86.5893 118.087L136.794 67.8822"/></svg>
<div class="b" style="left:1005.00px;top:637.00px;width:85.00px;height:25.00px;background:#1f1f1f;border:1px solid #3a3a3a;border-radius:4px;"></div>
<svg class="i" style="left:1014.20px;top:642.80px;" width="12" height="12" viewBox="0 0 24 24" fill="none" stroke="#c4c4c4" stroke-width="2" stroke-linecap="round" stroke-linejoin="round"><path d="M19 21v-2a4 4 0 0 0-4-4H9a4 4 0 0 0-4 4v2"/><circle cx="12" cy="7" r="4"/></svg>
<span class="t" style="top:643px;font-size:12.7px;color:#cdcdcd;left:1031.40px;letter-spacing:-0.032px;">Personal</span>
<svg class="i" style="left:1106.00px;top:641.00px;" width="16" height="16" viewBox="0 0 24 24" fill="none" stroke="#1ac968" stroke-width="2.1" stroke-linecap="round" stroke-linejoin="round"><circle cx="12" cy="12" r="10"/><path d="m9 12 2 2 4-4"/></svg>
<div class="b" style="left:1139.80px;top:643.70px;width:2.40px;height:2.40px;background:#ffffff;border-radius:0.6px;"></div>
<div class="b" style="left:1139.80px;top:647.80px;width:2.40px;height:2.40px;background:#ffffff;border-radius:0.6px;"></div>
<div class="b" style="left:1139.80px;top:651.90px;width:2.40px;height:2.40px;background:#ffffff;border-radius:0.6px;"></div>
<div class="b" style="left:0.00px;top:692.00px;width:1169.00px;height:69.00px;background:#212121;border:1px solid #363636;border-radius:8px;"></div>
<span class="t" style="top:712px;font-size:14.8px;color:#f9f9f9;left:17.20px;-webkit-text-stroke:0.42px currentColor;letter-spacing:0.031px;">WF-MUSIC-GEN: YouTube Music Selection</span>
<span class="t" style="top:730px;font-size:12.7px;color:#adadad;left:16.90px;letter-spacing:-0.033px;">Last updated 1 week ago</span>
<span class="t" style="top:728px;font-size:15.6px;color:#b4b4b4;left:160.90px;">|</span>
<span class="t" style="top:730px;font-size:12.7px;color:#adadad;left:172.60px;letter-spacing:0.051px;">Created 7 March</span>
<span class="t" style="top:728px;font-size:15.6px;color:#b4b4b4;left:270.90px;">|</span>
<svg class="i" style="left:282.80px;top:728.90px;" width="15.2" height="15.2" viewBox="0 0 180 180" fill="none" stroke="#b2b2b2" stroke-width="14.5" stroke-linecap="round" stroke-linejoin="round"><path d="M18 84.8528L85.8822 16.9706C95.2548 7.59798 110.451 7.59798 119.823 16.9706C129.196 26.3431 129.196 41.5391 119.823 50.9117L68.5581 102.177"/><path d="M69.2652 101.47L119.823 50.9117C129.196 41.5391 144.392 41.5391 153.765 50.9117L154.118 51.2652C163.491 60.6378 163.491 75.8338 154.118 85.2063L92.7248 146.6C89.6006 149.724 89.6006 154.789 92.7248 157.913L105.331 170.52"/><path d="M102.853 33.9411L52.6482 84.1457C43.2756 93.5183 43.2756 108.714 52.6482 118.087C62.0208 127.459 77.2167 127.459 86.5893 118.087L136.794 67.8822"/></svg>
<div class="b" style="left:1005.00px;top:714.00px;width:85.00px;height:25.00px;background:#1f1f1f;border:1px solid #3a3a3a;border-radius:4px;"></div>
<svg class="i" style="left:1014.20px;top:719.80px;" width="12" height="12" viewBox="0 0 24 24" fill="none" stroke="#c4c4c4" stroke-width="2" stroke-linecap="round" stroke-linejoin="round"><path d="M19 21v-2a4 4 0 0 0-4-4H9a4 4 0 0 0-4 4v2"/><circle cx="12" cy="7" r="4"/></svg>
<span class="t" style="top:720px;font-size:12.7px;color:#cdcdcd;left:1031.40px;letter-spacing:-0.032px;">Personal</span>
<svg class="i" style="left:1106.00px;top:718.00px;" width="16" height="16" viewBox="0 0 24 24" fill="none" stroke="#1ac968" stroke-width="2.1" stroke-linecap="round" stroke-linejoin="round"><circle cx="12" cy="12" r="10"/><path d="m9 12 2 2 4-4"/></svg>
<div class="b" style="left:1139.80px;top:720.70px;width:2.40px;height:2.40px;background:#ffffff;border-radius:0.6px;"></div>
<div class="b" style="left:1139.80px;top:724.80px;width:2.40px;height:2.40px;background:#ffffff;border-radius:0.6px;"></div>
<div class="b" style="left:1139.80px;top:728.90px;width:2.40px;height:2.40px;background:#ffffff;border-radius:0.6px;"></div>
<div class="b" style="left:0.00px;top:769.00px;width:1169.00px;height:69.00px;background:#212121;border:1px solid #363636;border-radius:8px;"></div>
<span class="t" style="top:789px;font-size:14.8px;color:#f9f9f9;left:17.20px;-webkit-text-stroke:0.42px currentColor;letter-spacing:0.148px;">WF-Browser: Browser Task Processor</span>
<span class="t" style="top:807px;font-size:12.7px;color:#adadad;left:16.90px;letter-spacing:0.075px;">Last updated 2 weeks ago</span>
<span class="t" style="top:805px;font-size:15.6px;color:#b4b4b4;left:169.70px;">|</span>
<span class="t" style="top:807px;font-size:12.7px;color:#adadad;left:181.40px;letter-spacing:0.087px;">Created 3 March</span>
<span class="t" style="top:805px;font-size:15.6px;color:#b4b4b4;left:280.20px;">|</span>
<svg class="i" style="left:292.10px;top:805.90px;" width="15.2" height="15.2" viewBox="0 0 180 180" fill="none" stroke="#b2b2b2" stroke-width="14.5" stroke-linecap="round" stroke-linejoin="round"><path d="M18 84.8528L85.8822 16.9706C95.2548 7.59798 110.451 7.59798 119.823 16.9706C129.196 26.3431 129.196 41.5391 119.823 50.9117L68.5581 102.177"/><path d="M69.2652 101.47L119.823 50.9117C129.196 41.5391 144.392 41.5391 153.765 50.9117L154.118 51.2652C163.491 60.6378 163.491 75.8338 154.118 85.2063L92.7248 146.6C89.6006 149.724 89.6006 154.789 92.7248 157.913L105.331 170.52"/><path d="M102.853 33.9411L52.6482 84.1457C43.2756 93.5183 43.2756 108.714 52.6482 118.087C62.0208 127.459 77.2167 127.459 86.5893 118.087L136.794 67.8822"/></svg>
<div class="b" style="left:1005.00px;top:791.00px;width:85.00px;height:25.00px;background:#1f1f1f;border:1px solid #3a3a3a;border-radius:4px;"></div>
<svg class="i" style="left:1014.20px;top:796.80px;" width="12" height="12" viewBox="0 0 24 24" fill="none" stroke="#c4c4c4" stroke-width="2" stroke-linecap="round" stroke-linejoin="round"><path d="M19 21v-2a4 4 0 0 0-4-4H9a4 4 0 0 0-4 4v2"/><circle cx="12" cy="7" r="4"/></svg>
<span class="t" style="top:797px;font-size:12.7px;color:#cdcdcd;left:1031.40px;letter-spacing:-0.032px;">Personal</span>
<svg class="i" style="left:1106.00px;top:795.00px;" width="16" height="16" viewBox="0 0 24 24" fill="none" stroke="#1ac968" stroke-width="2.1" stroke-linecap="round" stroke-linejoin="round"><circle cx="12" cy="12" r="10"/><path d="m9 12 2 2 4-4"/></svg>
<div class="b" style="left:1139.80px;top:797.70px;width:2.40px;height:2.40px;background:#ffffff;border-radius:0.6px;"></div>
<div class="b" style="left:1139.80px;top:801.80px;width:2.40px;height:2.40px;background:#ffffff;border-radius:0.6px;"></div>
<div class="b" style="left:1139.80px;top:805.90px;width:2.40px;height:2.40px;background:#ffffff;border-radius:0.6px;"></div>
<div class="b" style="left:0.00px;top:846.00px;width:1169.00px;height:69.00px;background:#212121;border:1px solid #363636;border-radius:8px;"></div>
<span class="t" style="top:866px;font-size:14.8px;color:#f9f9f9;left:17.20px;-webkit-text-stroke:0.42px currentColor;letter-spacing:0.087px;">WF-Video: Slideshow Video Renderer</span>
<span class="t" style="top:884px;font-size:12.7px;color:#adadad;left:16.90px;letter-spacing:0.075px;">Last updated 2 weeks ago</span>
<span class="t" style="top:882px;font-size:15.6px;color:#b4b4b4;left:169.70px;">|</span>
<span class="t" style="top:884px;font-size:12.7px;color:#adadad;left:181.40px;letter-spacing:0.087px;">Created 5 March</span>
<span class="t" style="top:882px;font-size:15.6px;color:#b4b4b4;left:280.20px;">|</span>
<svg class="i" style="left:292.10px;top:882.90px;" width="15.2" height="15.2" viewBox="0 0 180 180" fill="none" stroke="#b2b2b2" stroke-width="14.5" stroke-linecap="round" stroke-linejoin="round"><path d="M18 84.8528L85.8822 16.9706C95.2548 7.59798 110.451 7.59798 119.823 16.9706C129.196 26.3431 129.196 41.5391 119.823 50.9117L68.5581 102.177"/><path d="M69.2652 101.47L119.823 50.9117C129.196 41.5391 144.392 41.5391 153.765 50.9117L154.118 51.2652C163.491 60.6378 163.491 75.8338 154.118 85.2063L92.7248 146.6C89.6006 149.724 89.6006 154.789 92.7248 157.913L105.331 170.52"/><path d="M102.853 33.9411L52.6482 84.1457C43.2756 93.5183 43.2756 108.714 52.6482 118.087C62.0208 127.459 77.2167 127.459 86.5893 118.087L136.794 67.8822"/></svg>
<div class="b" style="left:1005.00px;top:868.00px;width:85.00px;height:25.00px;background:#1f1f1f;border:1px solid #3a3a3a;border-radius:4px;"></div>
<svg class="i" style="left:1014.20px;top:873.80px;" width="12" height="12" viewBox="0 0 24 24" fill="none" stroke="#c4c4c4" stroke-width="2" stroke-linecap="round" stroke-linejoin="round"><path d="M19 21v-2a4 4 0 0 0-4-4H9a4 4 0 0 0-4 4v2"/><circle cx="12" cy="7" r="4"/></svg>
<span class="t" style="top:874px;font-size:12.7px;color:#cdcdcd;left:1031.40px;letter-spacing:-0.032px;">Personal</span>
<svg class="i" style="left:1106.00px;top:872.00px;" width="16" height="16" viewBox="0 0 24 24" fill="none" stroke="#1ac968" stroke-width="2.1" stroke-linecap="round" stroke-linejoin="round"><circle cx="12" cy="12" r="10"/><path d="m9 12 2 2 4-4"/></svg>
<div class="b" style="left:1139.80px;top:874.70px;width:2.40px;height:2.40px;background:#ffffff;border-radius:0.6px;"></div>
<div class="b" style="left:1139.80px;top:878.80px;width:2.40px;height:2.40px;background:#ffffff;border-radius:0.6px;"></div>
<div class="b" style="left:1139.80px;top:882.90px;width:2.40px;height:2.40px;background:#ffffff;border-radius:0.6px;"></div>
</div>
<div class="b" style="left:1947.00px;top:414.00px;width:15.00px;height:894.00px;background:#2c2c2c;"></div>
<div class="b" style="left:1950.00px;top:432.00px;width:9.00px;height:349.00px;background:#a0a0a0;border-radius:4.5px;"></div>
<svg class="i" style="left:1949.6px;top:418px" width="10" height="9" viewBox="0 0 10 9"><path d="M5 1 9.300 7.500H.7z" fill="#a3a3a3" stroke="#a3a3a3" stroke-width="1" stroke-linejoin="round"/></svg>
<svg class="i" style="left:1949.6px;top:1296px" width="10" height="9" viewBox="0 0 10 9"><path d="M5 8 9.300 1.500H.7z" fill="#a3a3a3" stroke="#a3a3a3" stroke-width="1" stroke-linejoin="round"/></svg>
<span class="t" style="top:1338px;font-size:13.7px;color:#f2f2f2;left:1685.00px;letter-spacing:-0.255px;">Total 28</span>
<svg class="i" style="left:1749.25px;top:1336.25px;" width="15.5" height="15.5" viewBox="0 0 24 24" fill="none" stroke="#7a7a7a" stroke-width="1.7" stroke-linecap="round" stroke-linejoin="round"><path d="m15 18-6-6 6-6"/></svg>
<div class="b" style="left:1774.00px;top:1330.00px;width:30.00px;height:28.00px;border:1px solid #f2604e;border-radius:4px;"></div>
<span class="t" style="top:1338px;font-size:13.7px;color:#f2604e;left:1785.30px;-webkit-text-stroke:0.25px currentColor;">1</span>
<svg class="i" style="left:1813.25px;top:1336.25px;" width="15.5" height="15.5" viewBox="0 0 24 24" fill="none" stroke="#7a7a7a" stroke-width="1.7" stroke-linecap="round" stroke-linejoin="round"><path d="m9 18 6-6-6-6"/></svg>
<div class="b" style="left:1842.00px;top:1330.00px;width:100.00px;height:28.00px;border:1px solid #3b3b3b;border-radius:4px;"></div>
<span class="t" style="top:1338px;font-size:13.7px;color:#f2f2f2;left:1859.60px;letter-spacing:-0.220px;">50/page</span>
<svg class="i" style="left:1921.25px;top:1335.75px;" width="16.5" height="16.5" viewBox="0 0 24 24" fill="none" stroke="#8c8c8c" stroke-width="1.7" stroke-linecap="round" stroke-linejoin="round"><path d="m6 9 6 6 6-6"/></svg>
<div class="b" style="left:0.00px;top:1384.00px;width:2538.00px;height:42.00px;background:linear-gradient(90deg,#1f1f1f 0%,#1f1f1f 30%,#1f1e27 50%,#1f1e25 70%,#1f1f1f 100%);"></div>
<div class="b" style="left:0.00px;top:1384.00px;width:2538.00px;height:1.00px;background:#3d3d3f;"></div>
<svg class="i" style="left:8px;top:1388px" width="30" height="36" viewBox="0 -4 30 36"><defs><linearGradient id="cl" x1="0" y1="0" x2="0" y2="1"><stop offset="0" stop-color="#cfe0fb"/><stop offset=".55" stop-color="#dbe7fb"/><stop offset="1" stop-color="#9fbdf3"/></linearGradient><linearGradient id="dr" x1="0" y1="0" x2="0" y2="1"><stop offset="0" stop-color="#4d9bff"/><stop offset="1" stop-color="#0a6cff"/></linearGradient></defs><ellipse cx="13" cy="17" rx="12" ry="5.200" fill="url(#cl)"/><circle cx="10.800" cy="12.500" r="5.600" fill="url(#cl)"/><path d="M14 17.500 19.800 22.300Q20.300 25.300 17 27.300 13.900 25.600 14 22.500z" fill="url(#dr)"/><circle cx="20" cy="6" r="8.100" fill="#fb96a2"/></svg>
<span class="t" style="top:1393px;font-size:12px;color:#2b1418;left:24.70px;will-change:transform;">1</span>
<span class="t" style="top:1394px;font-size:12.1px;color:#ffffff;left:39.80px;letter-spacing:-0.853px;will-change:transform;">7°C</span>
<span class="t" style="top:1410px;font-size:12.1px;color:#ffffff;left:39.60px;letter-spacing:0.047px;will-change:transform;">Light rain</span>
<svg class="i" style="left:1015px;top:1397px" width="23" height="23" viewBox="0 0 23 23"><defs><linearGradient id="wl" x1="0" y1="0" x2="1" y2="1"><stop offset="0" stop-color="#7fdcff"/><stop offset="1" stop-color="#1b9de8"/></linearGradient></defs><g fill="url(#wl)"><rect x="0" y="0" width="11" height="11" rx=".8"/><rect x="12" y="0" width="11" height="11" rx=".8"/><rect x="0" y="12" width="11" height="11" rx=".8"/><rect x="12" y="12" width="11" height="11" rx=".8"/></g></svg>
<div class="b" style="left:1051.00px;top:1392.00px;width:220.00px;height:32.00px;background:#3a393f;border:1px solid #46454b;border-radius:16px;"></div>
<svg class="i" style="left:1061px;top:1400px" width="18" height="18" viewBox="0 0 18 18" fill="none" stroke="#e9e6ff" stroke-width="1.500" stroke-linecap="round"><circle cx="7.500" cy="7.500" r="5.300"/><path d="M11.500 11.500 16 16"/><path d="M13.500 4.500l.7 1.800 1.800.7-1.800.7-.7 1.800-.7-1.800-1.800-.7 1.800-.7z" fill="#e9e6ff" stroke="none"/></svg>
<span class="t" style="top:1402px;font-size:14.2px;color:#dadada;left:1088.30px;letter-spacing:-0.938px;will-change:transform;">Search</span>
<svg class="i" style="left:1221px;top:1396px" width="44" height="24" viewBox="0 0 44 24"><path d="M3 22c0-4 1-8 2.500-10 .5 3 1 6 .8 10z" fill="#9ad03c"/><path d="M6 23c.3-3 1.200-5.500 2.500-7 .3 2.500 0 5-.5 7z" fill="#c3dd4a"/><path d="M8 9c1-5 7-8 14-7 8 1 14 6 17 11 2 3.500 3 6 2 7-2 1.500-5-.5-7-3-3 2-8 3-12 2.500-2 2.500-5 3-6.500 2-1.500-1-1-3 .5-4.500C9 16 7.500 12.500 8 9z" fill="#a8a2b4"/><path d="M9 11c1.500 1.500 3.500 2 5.500 1.500" stroke="#6d6878" stroke-width="1" fill="none"/><circle cx="15" cy="8" r="1" fill="#3b3744"/></svg>
<svg class="i" style="left:1283px;top:1397px" width="24" height="23" viewBox="0 0 24 23"><rect x="0" y="6.500" width="17" height="15" rx="2" fill="#6f6f6f"/><rect x="6.500" y="0.500" width="17" height="15" rx="2" fill="#f3f3f3"/><rect x="6.500" y="6.500" width="10.500" height="9" fill="#bdbdbd"/></svg>
<svg class="i" style="left:1327px;top:1396px" width="25" height="25" viewBox="0 0 25 25"><path d="M18 1.200 24 4v17l-6 2.800L7 13.800l-4.500 3.500L.5 16l4-3.500-4-3.500 2-1.300L7 11.200z" fill="#1f9cf0"/><path d="M18 1.200 24 4v17l-6 2.800z" fill="#0d7bd0"/><path d="M18 7.500v10l-6.500-5z" fill="#1f1e25"/></svg>
<div class="b" style="left:1451.00px;top:1394.50px;width:39.60px;height:31.50px;background:#2f2e35;border-radius:5px 5px 0 0;"></div>
<svg class="i" style="left:1371.0px;top:1396.4px" width="24.4" height="24.4" viewBox="-12 -12 24 24"><circle r="12" fill="#fbc116"/><path d="M0 0 -10.390 -6A12 12 0 0 1 10.390 -6z" fill="#e33b2e"/><path d="M0 0 -10.390 -6A12 12 0 0 0 0 12L5.200 3z" fill="#2ca94f"/><path d="M0 0 10.390 -6H0z" fill="#e33b2e"/><circle r="5.600" fill="#fff"/><circle r="4.400" fill="#4a8af4"/></svg>
<div class="b" style="left:1383.90px;top:1391.40px;width:14.80px;height:14.80px;background:#4a4a4a;border-radius:7.4px;"></div>
<svg class="i" style="left:1414.5px;top:1396.4px" width="24.4" height="24.4" viewBox="-12 -12 24 24"><circle r="12" fill="#fbc116"/><path d="M0 0 -10.390 -6A12 12 0 0 1 10.390 -6z" fill="#e33b2e"/><path d="M0 0 -10.390 -6A12 12 0 0 0 0 12L5.200 3z" fill="#2ca94f"/><path d="M0 0 10.390 -6H0z" fill="#e33b2e"/><circle r="5.600" fill="#fff"/><circle r="4.400" fill="#4a8af4"/></svg>
<div class="b" style="left:1427.40px;top:1391.40px;width:14.80px;height:14.80px;background:#d8431f;border-radius:7.4px;"></div>
<span class="t" style="top:1396px;font-size:10px;color:#e8f0ff;left:1432.10px;font-weight:700;">L</span>
<svg class="i" style="left:1458.5px;top:1396.4px" width="24.4" height="24.4" viewBox="-12 -12 24 24"><circle r="12" fill="#fbc116"/><path d="M0 0 -10.390 -6A12 12 0 0 1 10.390 -6z" fill="#e33b2e"/><path d="M0 0 -10.390 -6A12 12 0 0 0 0 12L5.200 3z" fill="#2ca94f"/><path d="M0 0 10.390 -6H0z" fill="#e33b2e"/><circle r="5.600" fill="#fff"/><circle r="4.400" fill="#4a8af4"/></svg>
<div class="b" style="left:1471.40px;top:1391.40px;width:14.80px;height:14.80px;background:#0b57b0;border-radius:7.4px;"></div>
<span class="t" style="top:1396px;font-size:10px;color:#e8f0ff;left:1476.10px;font-weight:700;">L</span>
<svg class="i" style="left:1503.0px;top:1396.4px" width="24.4" height="24.4" viewBox="-12 -12 24 24"><circle r="12" fill="#fbc116"/><path d="M0 0 -10.390 -6A12 12 0 0 1 10.390 -6z" fill="#e33b2e"/><path d="M0 0 -10.390 -6A12 12 0 0 0 0 12L5.200 3z" fill="#2ca94f"/><path d="M0 0 10.390 -6H0z" fill="#e33b2e"/><circle r="5.600" fill="#fff"/><circle r="4.400" fill="#4a8af4"/></svg>
<div class="b" style="left:1336.90px;top:1424.20px;width:5.00px;height:2.50px;background:#9a9a9a;border-radius:2px 2px 0 0;"></div>
<div class="b" style="left:1380.70px;top:1424.20px;width:5.00px;height:2.50px;background:#9a9a9a;border-radius:2px 2px 0 0;"></div>
<div class="b" style="left:1424.20px;top:1424.20px;width:5.00px;height:2.50px;background:#9a9a9a;border-radius:2px 2px 0 0;"></div>
<div class="b" style="left:1512.70px;top:1424.20px;width:5.00px;height:2.50px;background:#9a9a9a;border-radius:2px 2px 0 0;"></div>
<div class="b" style="left:1463.20px;top:1423.60px;width:16.00px;height:3.00px;background:#f08a7a;border-radius:2px 2px 0 0;"></div>
<span class="t" style="top:1394px;font-size:12.1px;color:#ffffff;left:2501.40px;letter-spacing:0.105px;will-change:transform;">11:56</span>
<span class="t" style="top:1410px;font-size:12.1px;color:#ffffff;left:2468.80px;letter-spacing:0.204px;will-change:transform;">25/03/2026</span>
</body>
</html>
